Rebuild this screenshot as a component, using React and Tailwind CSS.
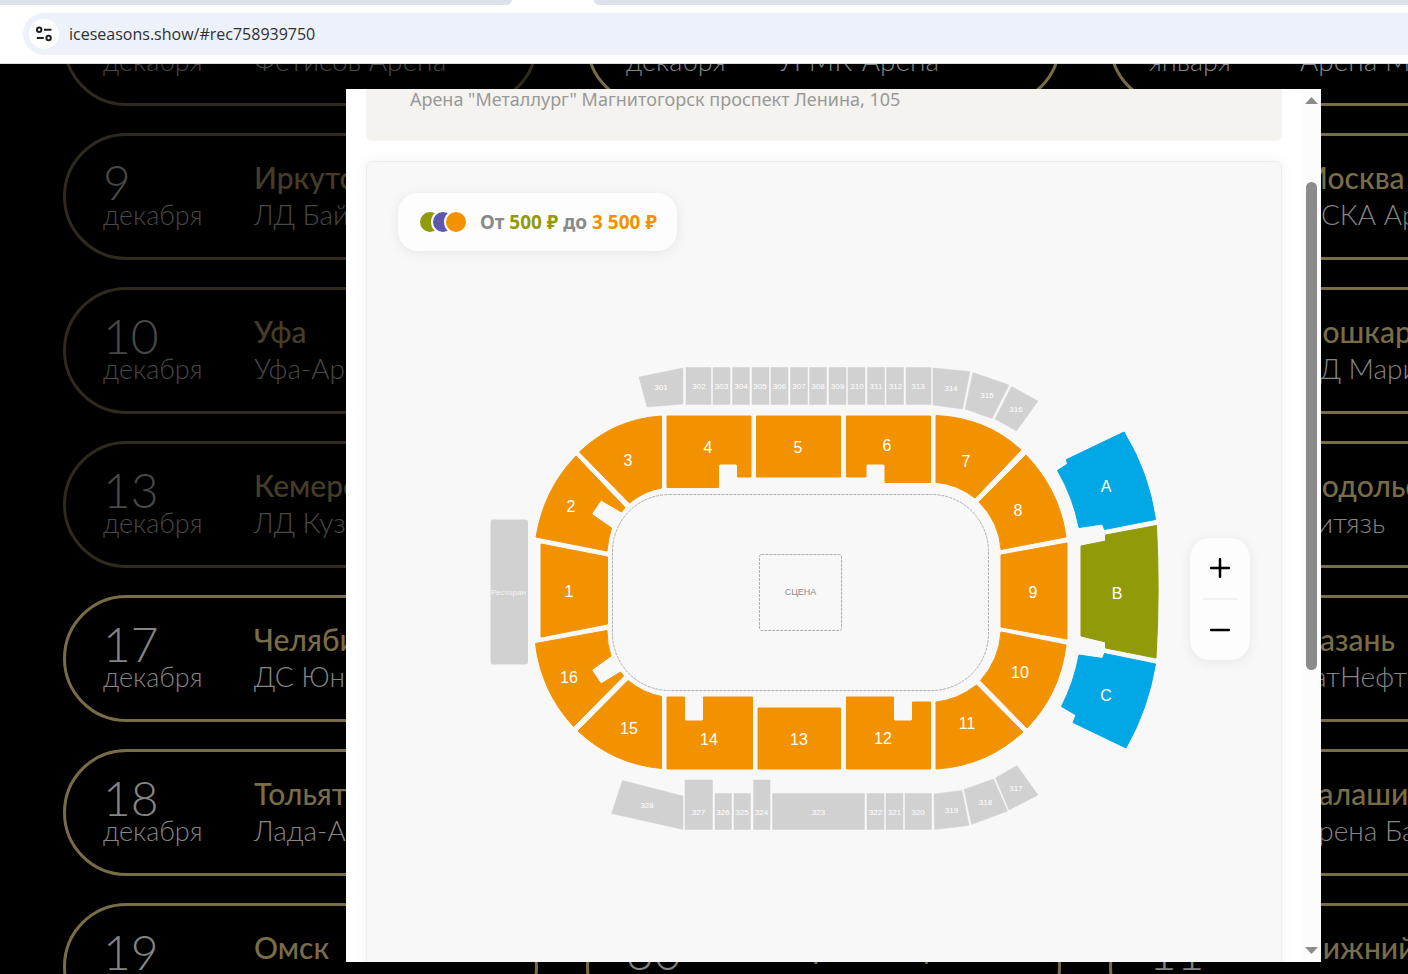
import React from 'react';
import clsx from 'clsx';

const COLUMNS = [
    [
        { month: 'декабря', arena: 'Фетисов Арена', past: true },
        { day: '9', month: 'декабря', city: 'Иркутск', arena: 'ЛД Байкал', past: true },
        { day: '10', month: 'декабря', city: 'Уфа', arena: 'Уфа-Арена', past: true },
        { day: '13', month: 'декабря', city: 'Кемерово', arena: 'ЛД Кузбасс', past: true },
        { day: '17', month: 'декабря', city: 'Челябинск', arena: 'ДС Юность' },
        { day: '18', month: 'декабря', city: 'Тольятти', arena: 'Лада-Арена' },
        { day: '19', month: 'декабря', city: 'Омск', arena: 'G-Drive Арена' },
    ],
    [
        { month: 'декабря', arena: 'УГМК-Арена' },
        {},
        {},
        {},
        {},
        {},
        { day: '30', city: 'Череповец', arena: 'Ледовый' },
    ],
    [
        { month: 'января', arena: 'Арена Мытищи' },
        { day: '3', month: 'января', city: 'Москва', arena: 'ЦСКА Арена' },
        { day: '5', month: 'января', city: 'Йошкар-Ола', arena: 'ЛД Марий Эл' },
        { day: '6', month: 'января', city: 'Подольск', arena: 'Витязь' },
        { day: '8', month: 'января', city: 'Казань', arena: 'ТатНефть Арена' },
        { day: '10', month: 'января', city: 'Балашиха', arena: 'Арена Балашиха' },
        { day: '11', month: 'января', city: 'Нижний Новгород', arena: 'КРК Нагорный' },
    ],
];

const ORANGE = '#f29200';
const BLUE = '#02a8e6';
const GREEN = '#919b0a';

const SECTORS = [
    { label: '1', x: 569, y: 591, fill: ORANGE, d: 'M541 544 L607.5 557 V624 L541 637 Z' },
    {
        label: '2', x: 571, y: 506, fill: ORANGE,
        d: 'M576 456 L625 507.5 L621.5 512 L601 500 L591.5 514 L611.5 528 Q608 539 607 551 L536 537 Q544 489 576 456 Z',
    },
    { label: '3', x: 628, y: 460, fill: ORANGE, d: 'M579.5 452 Q614 419 661.5 416 V488 Q644 491 629.5 503 Z' },
    { label: '4', x: 708, y: 447, fill: ORANGE, d: 'M667 416 H751 V477 H737.5 V466 Q737.5 464 735.5 464 H720.5 Q718.5 464 718.5 466 V487.5 H667 Z' },
    { label: '5', x: 798, y: 447, fill: ORANGE, d: 'M756.5 416 H840.5 V477 H756.5 Z' },
    { label: '6', x: 887, y: 445, fill: ORANGE, d: 'M846.5 416 H930.5 V482.5 H885 V466 Q885 464 883 464 H868 Q866 464 866 466 V477 H846.5 Z' },
    { label: '7', x: 966, y: 461, fill: ORANGE, d: 'M936 415.5 Q987 418 1021 450 L975 498 Q957 484 936 482.5 Z' },
    { label: '8', x: 1018, y: 510, fill: ORANGE, d: 'M1026 455 Q1060 491 1066 537 L1001 549.5 Q999 522 979 502 Z' },
    { label: '9', x: 1033, y: 592, fill: ORANGE, d: 'M1001 555 L1067 543 V639 L1001 627 Z' },
    { label: '10', x: 1020, y: 672, fill: ORANGE, d: 'M1001 632 L1066 645 Q1060 694 1027 728 L980.5 680.5 Q999 660 1001 632 Z' },
    { label: '11', x: 967, y: 723, fill: ORANGE, d: 'M976.5 685 L1023 732 Q986 766 936 769 V702 Q957 700 976.5 685 Z' },
    { label: '12', x: 883, y: 738, fill: ORANGE, d: 'M846.5 697 H893.5 V719 Q893.5 721 895.5 721 H910.5 Q912.5 721 912.5 719 V702 H930.5 V769 H846.5 Z' },
    { label: '13', x: 799, y: 739, fill: ORANGE, d: 'M758 708 H840.5 V769 H758 Z' },
    { label: '14', x: 709, y: 739, fill: ORANGE, d: 'M667 697 H684.5 V719 Q684.5 721 686.5 721 H701.5 Q703.5 721 703.5 719 V697 H752.5 V769 H667 Z' },
    { label: '15', x: 629, y: 728, fill: ORANGE, d: 'M628 680.5 Q643 693 661.5 696.5 V768.5 Q613 764 578 731 Z' },
    {
        label: '16', x: 569, y: 677, fill: ORANGE,
        d: 'M607 630.5 Q607 644 611 656 L591.5 670 L601 684 L620.5 672 L623.5 676 L573.5 726.5 Q541 691 535.5 643.5 Z',
    },
    {
        label: 'A', x: 1106, y: 486, fill: BLUE,
        d: 'M1124 432 Q1149 473 1155.5 519.5 L1104.5 529.5 L1102.5 524 L1079 527.5 Q1073 497 1057.5 470.5 L1067.5 464 L1066.5 459.5 Z',
    },
    {
        label: 'B', x: 1117, y: 593, fill: GREEN,
        d: 'M1156.5 525.5 Q1160 592 1156 658 L1105.5 648 V642 L1081 636 V546 L1105.5 541 V535 Z',
    },
    {
        label: 'C', x: 1106, y: 695, fill: BLUE,
        d: 'M1079 655 L1102.5 658.5 L1104.5 653.5 L1155.5 664 Q1148 709 1126 748 L1073 722.5 L1076 715 L1061.5 706.5 Q1074 682 1079 655 Z',
    },
];

const STANDS = [
    { label: '301', x: 661, y: 387, d: 'M639 377 L683 368 V404 L647 407 Z' },
    { label: '302', x: 699, y: 386, d: 'M686 367.5 H711 V404.5 H686 Z' },
    { label: '303', x: 721.5, y: 386, d: 'M713 367.5 H730 V404.5 H713 Z' },
    { label: '304', x: 741, y: 386, d: 'M732.5 367.5 H749.5 V404.5 H732.5 Z' },
    { label: '305', x: 760, y: 386, d: 'M752 367.5 H769 V404.5 H752 Z' },
    { label: '306', x: 779.5, y: 386, d: 'M771 367.5 H788 V404.5 H771 Z' },
    { label: '307', x: 799, y: 386, d: 'M790.5 367.5 H807.5 V404.5 H790.5 Z' },
    { label: '308', x: 818, y: 386, d: 'M809.5 367.5 H826.5 V404.5 H809.5 Z' },
    { label: '309', x: 837.5, y: 386, d: 'M829 367.5 H846 V404.5 H829 Z' },
    { label: '310', x: 857, y: 386, d: 'M848 367.5 H865 V404.5 H848 Z' },
    { label: '311', x: 876, y: 386, d: 'M867.5 367.5 H884.5 V404.5 H867.5 Z' },
    { label: '312', x: 895.5, y: 386, d: 'M886.5 367.5 H903.5 V404.5 H886.5 Z' },
    { label: '313', x: 918, y: 386, d: 'M906 367.5 H931 V404.5 H906 Z' },
    { label: '314', x: 951, y: 388, d: 'M933 368 L970 371.5 L962.5 409 L933 405 Z' },
    { label: '315', x: 987, y: 395, d: 'M973 372.5 L1009 385 L992 418.5 L965 409 Z' },
    { label: '316', x: 1016, y: 409, d: 'M1011.5 386.5 L1038 401 L1016.5 431 L995 419 Z' },
    { label: '317', x: 1016, y: 788, d: 'M995.5 778 L1017 765.5 L1038 795 L1009 810 Z' },
    { label: '318', x: 985.5, y: 802, d: 'M964 789.5 L993.5 779 L1007.5 811 L971.5 824.5 Z' },
    { label: '319', x: 951.5, y: 810, d: 'M934 794 L962 790.5 L969 825.5 L934.5 829.5 Z' },
    { label: '320', x: 918, y: 812, d: 'M905 793.5 H931.5 V829.5 H905 Z' },
    { label: '321', x: 894.5, y: 812, d: 'M886 793.5 H903 V829.5 H886 Z' },
    { label: '322', x: 875.5, y: 812, d: 'M867 793.5 H884 V829.5 H867 Z' },
    { label: '323', x: 818.5, y: 812, d: 'M772.5 793.5 H864.5 V829.5 H772.5 Z' },
    { label: '324', x: 761.5, y: 812, d: 'M753.5 780 H770 V829.5 H753.5 Z' },
    { label: '325', x: 742, y: 812, d: 'M734 793.5 H750.5 V829.5 H734 Z' },
    { label: '326', x: 723, y: 812, d: 'M715 793.5 H731.5 V829.5 H715 Z' },
    { label: '327', x: 698.5, y: 812, d: 'M685 780 H712.5 V829.5 H685 Z' },
    { label: '328', x: 647, y: 805, d: 'M622.5 780.5 L683 796 V829.5 L611.5 813.5 Z' },
];

const BrowserBar = () => (
    <header className="relative z-10 shrink-0 border-b border-[#dcdcdc] bg-white">
        <div className="flex h-[5px] gap-[82px]">
            <div className="w-[512px] shrink-0 rounded-br-[10px] bg-[#dde2ea]" />
            <div className="grow rounded-bl-[10px] bg-[#dde2ea]" />
        </div>
        <div className="pt-2 pb-2 pl-[23px]">
            <div className="flex h-[42px] items-center gap-[10px] rounded-l-full bg-[#ecf1fa] pl-[6px]">
                <button
                    type="button"
                    aria-label="Сведения о сайте"
                    className="flex size-[30px] shrink-0 items-center justify-center rounded-full bg-white"
                >
                    <svg width="16" height="16" viewBox="0 0 16 16" fill="none" stroke="#1f1f1f" strokeWidth="2">
                        <circle cx="3.2" cy="3.8" r="2.2" />
                        <path d="M8 3.8h7.5M.8 12h7" />
                        <circle cx="12.6" cy="12" r="2.2" />
                    </svg>
                </button>
                <input
                    type="text"
                    aria-label="Адресная строка"
                    defaultValue="iceseasons.show/#rec758939750"
                    className="grow bg-transparent font-['Open_Sans',sans-serif] text-[16px] text-[#303030] outline-none"
                />
            </div>
        </div>
    </header>
);

const EventCard = ({ event }) => (
    <a
        href="#rec758939750"
        className={clsx(
            'flex h-[127px] shrink-0 rounded-full border-[3px] pt-6 pl-[37px] whitespace-nowrap',
            event.past ? 'border-[#2f2a1d] text-[#484848]' : 'border-[#796d48] text-[#858585]'
        )}
    >
        <div className="w-[151px] shrink-0 pt-1">
            <div className="h-9 text-[48px] leading-[36px] font-light">{event.day}</div>
            <div className="text-[27px] leading-[30px] font-light">{event.month}</div>
        </div>
        <div className="min-w-0">
            <div
                className={clsx(
                    'h-9 text-[30px] leading-[34px] font-medium',
                    event.past ? 'text-[#453d28]' : 'text-[#796d48]'
                )}
            >
                {event.city}
            </div>
            <div className="text-[28px] leading-[37px] font-light">{event.arena}</div>
        </div>
    </a>
);

const HallMap = () => (
    <svg
        viewBox="367 162 914 800"
        className="block w-full font-['Liberation_Sans',sans-serif]"
        textAnchor="middle"
        role="img"
        aria-label="Схема зала"
    >
        <rect x="490.5" y="519.5" width="37.5" height="145" rx="3" fill="#d1d1d1" />
        <text x="508.5" y="595" fontSize="8" fill="#f4f4f4">Ресторан</text>
        <rect x="612.5" y="494.5" width="376" height="196" rx="57" fill="none" stroke="#b0b0b0" strokeDasharray="3 1" />
        <rect x="759.5" y="554.5" width="82" height="76" rx="2" fill="none" stroke="#b0b0b0" strokeDasharray="3 1" />
        <text x="800.5" y="595" fontSize="9" fill="#8c8c8c">СЦЕНА</text>
        {STANDS.map((stand) => (
            <g key={stand.label}>
                <path d={stand.d} fill="#d1d1d1" stroke="#d1d1d1" strokeWidth="0.5" strokeLinejoin="round" />
                <text x={stand.x} y={stand.y + 3} fontSize="8" fill="#fff">{stand.label}</text>
            </g>
        ))}
        {SECTORS.map((sector) => (
            <g key={sector.label}>
                <path d={sector.d} fill={sector.fill} stroke={sector.fill} strokeWidth="1" strokeLinejoin="round" />
                <text x={sector.x} y={sector.y + 6} fontSize="16" fill="#fff">{sector.label}</text>
            </g>
        ))}
    </svg>
);

const PriceLegend = () => (
    <div className="absolute top-[31px] left-[31px] flex h-[58px] items-center gap-3 rounded-[20px] bg-[#fdfdfd] px-5 shadow-[0_2px_12px_rgba(0,0,0,0.08)]">
        <div className="flex -space-x-[11px]">
            <span className="size-6 rounded-full border-2 border-[#fdfdfd] bg-[#919b0a]" />
            <span className="size-6 rounded-full border-2 border-[#fdfdfd] bg-[#5d58ae]" />
            <span className="size-6 rounded-full border-2 border-[#fdfdfd] bg-[#f29200]" />
        </div>
        <p className="font-['Noto_Sans',sans-serif] text-[19px] font-bold whitespace-nowrap text-[#8a8a8a]">
            От <span className="text-[#919b0a]">500 ₽</span> до <span className="text-[#f29200]">3 500 ₽</span>
        </p>
    </div>
);

const ZoomControls = () => (
    <div className="absolute top-[376px] right-[31px] flex w-[60px] flex-col items-center rounded-[20px] bg-[#fdfdfd] shadow-[0_2px_12px_rgba(0,0,0,0.08)]">
        <button type="button" aria-label="Приблизить" className="flex h-[60px] w-full items-center justify-center">
            <svg width="20" height="20" viewBox="0 0 20 20" stroke="#000" strokeWidth="2.5" strokeLinecap="round">
                <path d="M1.2 10h17.6M10 1.2v17.6" />
            </svg>
        </button>
        <div className="h-[2px] w-[35px] bg-[#f2f2f2]" />
        <button type="button" aria-label="Отдалить" className="flex h-[60px] w-full items-center justify-center">
            <svg width="20" height="20" viewBox="0 0 20 20" stroke="#000" strokeWidth="2.5" strokeLinecap="round">
                <path d="M1.2 10h17.6" />
            </svg>
        </button>
    </div>
);

const Scrollbar = () => (
    <div className="flex w-[19px] shrink-0 flex-col items-center bg-[#fcfcfc] py-2">
        <svg width="13" height="7" viewBox="0 0 13 7" fill="#8b8b8b">
            <path d="M6.5 0L13 7H0z" />
        </svg>
        <div className="mt-[78px] h-[57%] w-[11px] rounded-full bg-[#8b8b8b]" />
        <svg className="mt-auto" width="13" height="7" viewBox="0 0 13 7" fill="#8b8b8b">
            <path d="M0 0h13L6.5 7z" />
        </svg>
    </div>
);

const TicketModal = () => (
    <div role="dialog" aria-label="Билеты" className="absolute top-[25px] right-[87px] bottom-3 left-[346px] flex overflow-hidden bg-white">
        <div className="flex min-w-0 grow flex-col gap-5 px-5">
            <div className="h-[52px] shrink-0 rounded-b-md bg-[#f5f3ef] px-11">
                <p className="font-['Noto_Sans',sans-serif] text-[18px] leading-5 whitespace-nowrap text-[#999]">
                    Арена "Металлург" Магнитогорск проспект Ленина, 105
                </p>
            </div>
            <div className="relative shrink-0 rounded-md border border-[#eee] bg-[#f8f8f8] pb-10 shadow-[0_0_16px_rgba(0,0,0,0.05)]">
                <HallMap />
                <PriceLegend />
                <ZoomControls />
            </div>
        </div>
        <Scrollbar />
    </div>
);

/**
 * Tour schedule page with the ticket modal open.
 */
const App = () => {
    return (
        <div className="flex h-screen flex-col overflow-hidden bg-black">
            <BrowserBar />
            <main className="relative min-h-0 grow">
                <div className="-mt-[85px] flex h-[calc(100%+85px)] gap-12 overflow-hidden pl-[63px] font-['Lato',sans-serif]">
                    {COLUMNS.map((events, column) => (
                        <div key={column} className="flex w-[475px] shrink-0 flex-col gap-[27px]">
                            {events.map((event, row) => (
                                <EventCard key={row} event={event} />
                            ))}
                        </div>
                    ))}
                </div>
                <TicketModal />
            </main>
        </div>
    );
};

export default App;
